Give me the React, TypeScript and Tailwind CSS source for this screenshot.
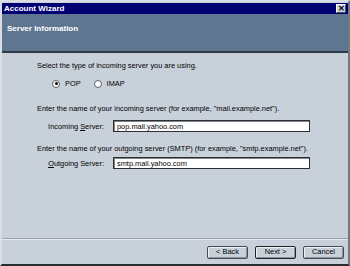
import React from 'react';

function Radio({ checked, label }: { checked?: boolean; label: string }) {
  return (
    <label className="flex items-center gap-[5px]">
      <span className="flex h-[8px] w-[8px] items-center justify-center rounded-full border border-[#5a5f66] bg-white">
        {checked && <span className="h-[3px] w-[3px] rounded-full bg-black" />}
      </span>
      <span>{label}</span>
    </label>
  );
}

function Field({ label, hot, value }: { label: string; hot: string; value: string }) {
  const i = label.indexOf(hot);
  return (
    <div className="flex items-center">
      <div className="w-[111px] pr-[9px] text-right">
        {label.slice(0, i)}
        <span className="underline">{hot}</span>
        {label.slice(i + 1)}
      </div>
      <div className="flex h-[12px] w-[197px] items-center border border-[#2b2f33] bg-white pl-[3px] shadow-[inset_1px_1px_0_#7d848c]">
        {value}
      </div>
    </div>
  );
}

function Btn({ children, def }: { children: React.ReactNode; def?: boolean }) {
  return (
    <button
      className={`flex h-[13px] w-[41px] items-center justify-center rounded-[2px] border bg-[#c8d0da] shadow-[inset_1px_1px_0_#eef1f4,inset_-1px_-1px_0_#8c949d] ${
        def ? 'border-[#1e2126]' : 'border-[#454b52]'
      }`}
    >
      {children}
    </button>
  );
}

export default function App() {
  return (
    <div
      className="flex h-[266px] w-[350px] flex-col border-b-2 border-l-2 border-r-2 border-t-2 border-b-[#2a2d31] border-l-[#d9dee4] border-r-[#70777f] border-t-[#d9dee4] bg-[#c8d0da] text-[7.4px] text-black"
      style={{ fontFamily: 'Tahoma, "Liberation Sans", Arial, sans-serif' }}
    >
      <div className="mt-px flex h-[11px] items-center justify-between bg-[#000073] pl-[2px] pr-[2px]">
        <span className="text-[8px] font-bold text-white">Account Wizard</span>
        <span className="flex h-[9px] w-[10px] items-center justify-center border border-b-[#4c5157] border-l-white border-r-[#4c5157] border-t-white bg-[#c8d0da] text-[8px] font-bold leading-none">
          ✕
        </span>
      </div>
      <div className="h-[39px] border-b-2 border-b-[#2f3a47] bg-[#5e7690] pl-[5px] pt-[9px] text-[8px] font-bold text-white">
        Server Information
      </div>
      <div className="flex flex-1 flex-col pl-[35px] pt-[7px] leading-[11px]">
        <div>Select the type of incoming server you are using.</div>
        <div className="mt-[7px] flex gap-[13px] pl-[15px]">
          <Radio checked label="POP" />
          <Radio label="IMAP" />
        </div>
        <div className="mt-[14px]">Enter the name of your incoming server (for example, &quot;mail.example.net&quot;).</div>
        <div className="-ml-[35px] mt-[6px]">
          <Field label="Incoming Server:" hot="S" value="pop.mail.yahoo.com" />
        </div>
        <div className="mt-[11px]">Enter the name of your outgoing server (SMTP) (for example, &quot;smtp.example.net&quot;).</div>
        <div className="-ml-[35px] mt-[3px]">
          <Field label="Outgoing Server:" hot="O" value="smtp.mail.yahoo.com" />
        </div>
      </div>
      <div className="h-[2px] border-t border-b border-t-[#9aa3ad] border-b-[#e6eaee]" />
      <div className="flex h-[24px] items-center justify-end gap-[7px] pr-[4px]">
        <Btn>&lt; Back</Btn>
        <Btn def>Next &gt;</Btn>
        <Btn>Cancel</Btn>
      </div>
    </div>
  );
}
